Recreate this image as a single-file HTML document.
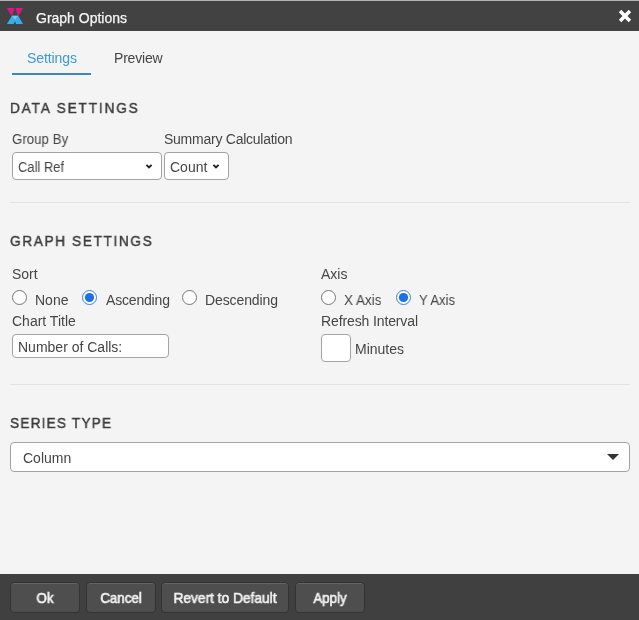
<!DOCTYPE html>
<html><head><meta charset="utf-8">
<style>
html,body{margin:0;padding:0;}
body{width:639px;height:620px;position:relative;overflow:hidden;background:#f4f4f4;font-family:"Liberation Sans",sans-serif;color:#444;}
.t{position:absolute;white-space:nowrap;line-height:1;will-change:transform;}
.abs{position:absolute;box-sizing:border-box;}
#title{left:0;top:0;width:639px;height:31px;background:#424242;border-top:1px solid #b2b2b2;}
.lbl{font-size:14px;color:#454545;}
.hd{font-size:15.5px;font-weight:normal;letter-spacing:2.1px;color:#3c3c3c;-webkit-text-stroke:0.45px #3c3c3c;transform:scaleX(0.88);transform-origin:0 0;}
.sel{background:#fff;border:1px solid #a3a3a3;border-radius:4px;}
.sep{height:1px;background:#e4e4e4;left:10px;width:620px;}
#foot{left:0;top:574px;width:639px;height:46px;background:#404040;}
.btn{top:582px;height:31px;background:#4e4e4e;border:1px solid #333;border-radius:4px;box-shadow:inset 0 1px 0 #656565;}
.bt{font-size:14px;font-weight:normal;color:#f2f2f2;-webkit-text-stroke:0.65px #f2f2f2;text-align:center;transform:scaleX(0.95);transform-origin:50% 0;}
</style></head><body>
<div class="abs" id="title"></div>
<svg class="abs" style="left:0;top:0" width="40" height="31" viewBox="0 0 40 31">
 <defs><linearGradient id="mg" x1="0" y1="0" x2="0" y2="1"><stop offset="0" stop-color="#e8108e"/><stop offset="1" stop-color="#cc1f76"/></linearGradient></defs>
 <polygon points="6.9,7.9 14.5,7.9 12.1,15.4 11.2,15.4" fill="url(#mg)"/>
 <polygon points="15.5,7.9 23,7.9 18.8,15.4 17.9,15.4" fill="url(#mg)"/>
 <polygon points="11.9,15.7 18.2,15.7 23,23.9 16.1,23.9 15,21.2 13.7,23.9 6.9,23.9" fill="#36ace9"/>
 <polygon points="11.9,15.7 18.2,15.7 15,19.8" fill="#62d0fb"/>
</svg>
<div class="t" style="left:35.5px;top:10.8px;font-size:14px;color:#f5f5f5;-webkit-text-stroke:0.25px #f5f5f5;">Graph Options</div>
<svg class="abs" style="left:617px;top:8px" width="16" height="16" viewBox="0 0 16 16">
 <path d="M4.3 4.3 L11.7 11.7 M11.7 4.3 L4.3 11.7" stroke="#fff" stroke-width="3.5" stroke-linecap="square"/>
</svg>

<div class="t" style="left:27px;top:51.3px;font-size:14px;letter-spacing:-0.1px;color:#3b9ad2;">Settings</div>
<div class="t" style="left:114px;top:51.3px;font-size:14px;letter-spacing:-0.2px;color:#444;">Preview</div>
<div class="abs" style="left:12px;top:73px;width:79px;height:2px;background:#3d86ba;"></div>

<div class="t hd" style="left:10px;top:99.8px;">DATA SETTINGS</div>
<div class="t lbl" style="left:12px;top:132.1px;transform:scaleX(0.95);transform-origin:0 0;">Group By</div>
<div class="t lbl" style="left:164px;top:132.1px;letter-spacing:-0.25px;">Summary Calculation</div>
<div class="abs sel" style="left:12px;top:152px;width:150px;height:28px;"></div>
<div class="t lbl" style="left:18px;top:160.1px;transform:scaleX(0.925);transform-origin:0 0;">Call Ref</div>
<svg class="abs" style="left:143.6px;top:162px" width="10" height="10" viewBox="0 0 10 10"><path d="M2.4 2.9 L5 5.5 L7.6 2.9" fill="none" stroke="#222" stroke-width="1.9"/></svg>
<div class="abs sel" style="left:164px;top:152px;width:65px;height:28px;"></div>
<div class="t lbl" style="left:170px;top:160.1px;">Count</div>
<svg class="abs" style="left:210.6px;top:162px" width="10" height="10" viewBox="0 0 10 10"><path d="M2.4 2.9 L5 5.5 L7.6 2.9" fill="none" stroke="#222" stroke-width="1.9"/></svg>

<div class="abs sep" style="top:202px;"></div>

<div class="t hd" style="left:10px;top:233px;letter-spacing:1.85px;">GRAPH SETTINGS</div>
<div class="t lbl" style="left:12px;top:267.4px;">Sort</div>
<svg class="abs" style="left:11px;top:289px" width="17" height="17" viewBox="0 0 17 17"><circle cx="8.5" cy="8.5" r="7" fill="#fff" stroke="#767676" stroke-width="1"/></svg>
<div class="t lbl" style="left:35px;top:293.2px;">None</div>
<svg class="abs" style="left:81px;top:289px" width="17" height="17" viewBox="0 0 17 17"><circle cx="8.5" cy="8.5" r="7" fill="#fff" stroke="#3580ee" stroke-width="1"/><circle cx="8.5" cy="8.5" r="4.6" fill="#1c70ee"/></svg>
<div class="t lbl" style="left:105.5px;top:293.2px;letter-spacing:-0.18px;">Ascending</div>
<svg class="abs" style="left:181px;top:289px" width="17" height="17" viewBox="0 0 17 17"><circle cx="8.5" cy="8.5" r="7" fill="#fff" stroke="#767676" stroke-width="1"/></svg>
<div class="t lbl" style="left:205px;top:293.2px;letter-spacing:-0.1px;">Descending</div>
<div class="t lbl" style="left:12px;top:313.9px;">Chart Title</div>
<div class="abs sel" style="left:12px;top:334px;width:157px;height:24px;"></div>
<div class="t lbl" style="left:18px;top:340.2px;">Number of Calls:</div>

<div class="t lbl" style="left:321px;top:267.4px;">Axis</div>
<svg class="abs" style="left:320px;top:289px" width="17" height="17" viewBox="0 0 17 17"><circle cx="8.5" cy="8.5" r="7" fill="#fff" stroke="#767676" stroke-width="1"/></svg>
<div class="t lbl" style="left:344px;top:293.2px;transform:scaleX(0.96);transform-origin:0 0;">X Axis</div>
<svg class="abs" style="left:395px;top:289px" width="17" height="17" viewBox="0 0 17 17"><circle cx="8.5" cy="8.5" r="7" fill="#fff" stroke="#3580ee" stroke-width="1"/><circle cx="8.5" cy="8.5" r="4.6" fill="#1c70ee"/></svg>
<div class="t lbl" style="left:418.6px;top:293.2px;transform:scaleX(0.93);transform-origin:0 0;">Y Axis</div>
<div class="t lbl" style="left:321px;top:313.9px;letter-spacing:-0.12px;">Refresh Interval</div>
<div class="abs sel" style="left:321px;top:334px;width:30px;height:28px;"></div>
<div class="t lbl" style="left:355px;top:342px;">Minutes</div>

<div class="abs sep" style="top:384px;"></div>

<div class="t hd" style="left:10px;top:415.1px;letter-spacing:1.35px;">SERIES TYPE</div>
<div class="abs sel" style="left:10px;top:442px;width:620px;height:30px;border-radius:4px;"></div>
<div class="t lbl" style="left:23px;top:451.2px;">Column</div>
<svg class="abs" style="left:606px;top:452px" width="14" height="9" viewBox="0 0 14 9"><polygon points="1,2 13,2 7,8" fill="#333"/></svg>

<div class="abs" id="foot"></div>
<div class="abs btn" style="left:10px;width:70px;"></div>
<div class="t bt" style="left:10px;width:70px;top:591.2px;">Ok</div>
<div class="abs btn" style="left:86px;width:70px;"></div>
<div class="t bt" style="left:86px;width:70px;top:591.2px;">Cancel</div>
<div class="abs btn" style="left:161px;width:128px;"></div>
<div class="t bt" style="left:161px;width:128px;top:591.2px;transform:scaleX(0.98);">Revert to Default</div>
<div class="abs btn" style="left:295px;width:70px;"></div>
<div class="t bt" style="left:295px;width:70px;top:591.2px;">Apply</div>
</body></html>
